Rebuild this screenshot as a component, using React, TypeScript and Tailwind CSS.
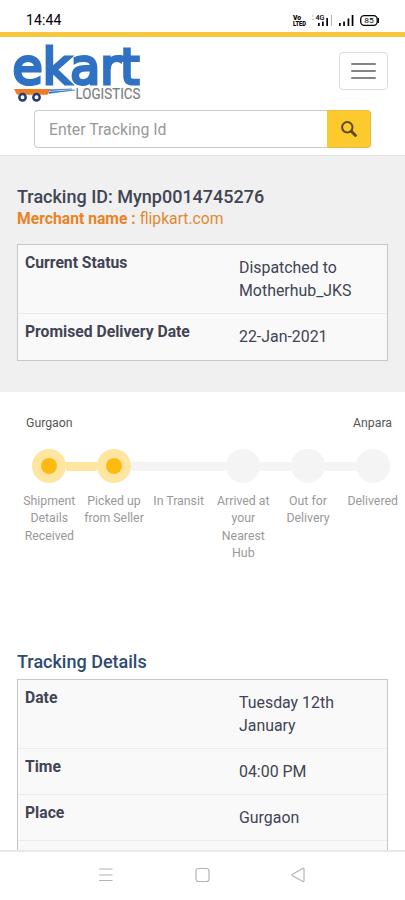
import { clsx } from "clsx";

type Row = { label: string; value: string; tall?: boolean };

const statusRows: Row[] = [
  { label: "Current Status", value: "Dispatched to Motherhub_JKS", tall: true },
  { label: "Promised Delivery Date", value: "22-Jan-2021" },
];

const detailRows: Row[] = [
  { label: "Date", value: "Tuesday 12th January", tall: true },
  { label: "Time", value: "04:00 PM" },
  { label: "Place", value: "Gurgaon" },
];

const steps = [
  { label: "Shipment Details Received", dot: "done" },
  { label: "Picked up from Seller", dot: "done" },
  { label: "In Transit", dot: "none" },
  { label: "Arrived at your Nearest Hub", dot: "pending" },
  { label: "Out for Delivery", dot: "pending" },
  { label: "Delivered", dot: "pending" },
];

function StatusBar() {
  return (
    <div className="flex h-8 shrink-0 items-start justify-between pt-[11px] pl-[26px]">
      <span className="text-[14px] leading-[18px] tracking-[0.1px] text-black">14:44</span>
      <svg width="113" height="18" viewBox="292 11 113 18" className="text-black" fill="currentColor">
        <text x="293" y="19.5" fontSize="7" fontWeight="900" textLength="8" lengthAdjust="spacingAndGlyphs">Vo</text>
        <text x="293" y="26" fontSize="7" fontWeight="900" textLength="13" lengthAdjust="spacingAndGlyphs">LTED</text>
        <path d="M312 15.5h1.5v1H312zM312 19h1.5v1H312z" opacity=".3" />
        <text x="315.5" y="20" fontSize="8" fontWeight="500" textLength="9" lengthAdjust="spacingAndGlyphs">4G</text>
        <path d="M318 23h1.7v3H318zM322 21.5h1.7v4.5H322zM326.3 18h1.7v8h-1.7z" />
        <path d="M331 15h1v11h-1z" opacity=".3" />
        <path d="M339 23h1.7v3H339zM343.2 21.5h1.7v4.5h-1.7zM347.6 18.5h1.7v7.5h-1.7zM351.7 15h1.7v11h-1.7z" />
        <rect x="360.7" y="15.7" width="16.5" height="9.6" rx="3.5" fill="none" stroke="currentColor" strokeWidth="1.3" />
        <path d="M377.7 18h1.3v5h-1.3z" />
        <text x="364.3" y="23.3" fontSize="8" textLength="9.5" lengthAdjust="spacingAndGlyphs">85</text>
      </svg>
    </div>
  );
}

function Logo() {
  return (
    <svg width="130" height="62" viewBox="13 42 130 62" className="overflow-visible">
      <text
        x="12.5"
        y="84.3"
        fontSize="50.5"
        fontFamily="'DejaVu Sans', sans-serif"
        fontWeight="400"
        textLength="127"
        lengthAdjust="spacingAndGlyphs"
        fill="#2f72c4"
        stroke="#2f72c4"
        strokeWidth="3.2"
      >
        ekart
      </text>
      <path d="M14 89h36.5l-3 5.8H17z" fill="#ee7c20" />
      <path d="M50 89.7l22-.7-22 1.8zM49 92l26-2-26 3.4z" fill="#2f72c4" stroke="#2f72c4" strokeWidth=".5" />
      <g fill="#fff" stroke="#253c78" strokeWidth="2.5">
        <circle cx="22.5" cy="97.3" r="3.2" />
        <circle cx="36.5" cy="97.3" r="3.2" />
      </g>
      <text
        x="75.5"
        y="99"
        fontSize="14.5"
        fontWeight="400"
        textLength="65"
        lengthAdjust="spacingAndGlyphs"
        fill="#7d8083"
        stroke="#7d8083"
        strokeWidth=".2"
      >
        LOGISTICS
      </text>
    </svg>
  );
}

function Header() {
  return (
    <header className="h-[124px] shrink-0 border-t-[5px] border-b border-t-[#f7c83c] border-b-[#e3e3e3] bg-white">
      <div className="flex justify-between pt-[5px] pr-[17px] pl-[13px]">
        <Logo />
        <button className="mt-[10px] flex h-[38px] w-[49px] flex-col items-center justify-center gap-[5px] rounded-[4px] border border-[#dcdcdc]">
          <span className="h-[2px] w-[25px] rounded-[1px] bg-[#858585]" />
          <span className="h-[2px] w-[25px] rounded-[1px] bg-[#858585]" />
          <span className="h-[2px] w-[25px] rounded-[1px] bg-[#858585]" />
        </button>
      </div>
      <div className="mt-[6px] ml-[34px] flex h-[38px] w-[337px]">
        <div className="flex flex-1 items-center rounded-l-[4px] border border-r-0 border-[#cccccc] pt-[2px] pl-[14px] text-[15.8px] text-[#999]">
          Enter Tracking Id
        </div>
        <button className="flex w-[44px] items-center justify-center rounded-r-[4px] border border-l-0 border-[#e4bd49] bg-[#fdca2e]">
          <svg width="16" height="16" viewBox="0 0 16 16" fill="none" stroke="#5b4a16">
            <circle cx="6.3" cy="6.3" r="5.2" strokeWidth="2" />
            <path d="M10.3 10.3l4.2 4.2" strokeWidth="2.8" strokeLinecap="round" />
          </svg>
        </button>
      </div>
    </header>
  );
}

function InfoTable({ rows, children }: { rows: Row[]; children?: React.ReactNode }) {
  return (
    <div className="w-[371px] border border-[#c5c8cb] bg-[#f9f9f9] pb-px text-[15.9px] leading-[22.5px] text-[#414453]">
      {rows.map((row, i) => (
        <div
          key={row.label}
          className={clsx("flex pl-[7px]", row.tall ? "h-[68px]" : "h-[46px]", i > 0 && "border-t border-[#ececec]")}
        >
          <div className="w-[214px] pt-[7px] text-[15.7px] font-bold">{row.label}</div>
          <div className="w-[125px] pt-[12px]">{row.value}</div>
        </div>
      ))}
      {children}
    </div>
  );
}

function Progress() {
  return (
    <section className="h-[253px] shrink-0 pt-[22px] text-[12.3px]">
      <div className="flex justify-between pr-[13px] pl-[26px] leading-[18px] text-[#555]">
        <span>Gurgaon</span>
        <span>Anpara</span>
      </div>
      <div className="mt-[17px] ml-[17px] grid w-[388px] grid-cols-6">
        {steps.map((step, i) => (
          <div key={step.label} className="flex flex-col items-center">
            <div className="flex h-[34px] w-full items-center">
              <span className={clsx("h-[9px] flex-1", i === 1 && "bg-[#fee6a1]", i > 1 && "bg-[#f4f4f4]")} />
              {step.dot === "none" ? (
                <span className="h-[9px] w-[34px] bg-[#f4f4f4]" />
              ) : (
                <span
                  className={clsx(
                    "flex size-[34px] items-center justify-center rounded-full",
                    step.dot === "done" ? "bg-[#fee6a1]" : "bg-[#f4f4f4]"
                  )}
                >
                  {step.dot === "done" && <span className="size-4 rounded-full bg-[#fdba12]" />}
                </span>
              )}
              <span className={clsx("h-[9px] flex-1", i === 0 && "bg-[#fee6a1]", i > 0 && i < 5 && "bg-[#f4f4f4]")} />
            </div>
            <p className="mt-[10px] w-[62px] text-center leading-[17.4px] text-[#999]">{step.label}</p>
          </div>
        ))}
      </div>
    </section>
  );
}

function NavBar() {
  return (
    <nav className="flex h-[50px] shrink-0 items-center border-t-2 border-[#e8e8e8] bg-white pb-[2px] pl-[98px]">
      <svg width="208" height="16" fill="none" stroke="#b4b4b4" strokeWidth="1.2">
        <path d="M1 2h13.5M1 8h13.5M1 13.5h13.5" />
        <rect x="98" y="1.5" width="13" height="13" rx="2.5" />
        <path d="M206 2.2v11.6q0 1.2-1 .7l-10.5-5.7q-1-.8 0-1.5l10.5-6q1-.4 1 .9z" />
      </svg>
    </nav>
  );
}

export default function App() {
  return (
    <div className="flex h-[900px] w-[405px] flex-col overflow-hidden bg-white font-[Roboto,sans-serif]">
      <StatusBar />
      <Header />
      <main className="flex min-h-0 flex-1 flex-col overflow-hidden">
        <section className="h-[236px] shrink-0 bg-[#f0f0f0] px-[17px] pt-[30px]">
          <h1 className="text-[18px] leading-[22px] font-medium text-[#414453]">Tracking ID: Mynp0014745276</h1>
          <p className="mt-px mb-[15px] text-[15.7px] leading-5 text-[#df8a31]">
            <span className="font-bold text-[#e98324]">Merchant name : </span>
            flipkart.com
          </p>
          <InfoTable rows={statusRows} />
        </section>
        <Progress />
        <section className="shrink-0 px-[17px] pt-[6px]">
          <h2 className="mb-[6px] text-[18px] leading-[22px] font-medium text-[#2d4b73]">Tracking Details</h2>
          <InfoTable rows={detailRows}>
            <div className="h-[46px] border-t border-[#ececec]" />
          </InfoTable>
        </section>
      </main>
      <NavBar />
    </div>
  );
}
